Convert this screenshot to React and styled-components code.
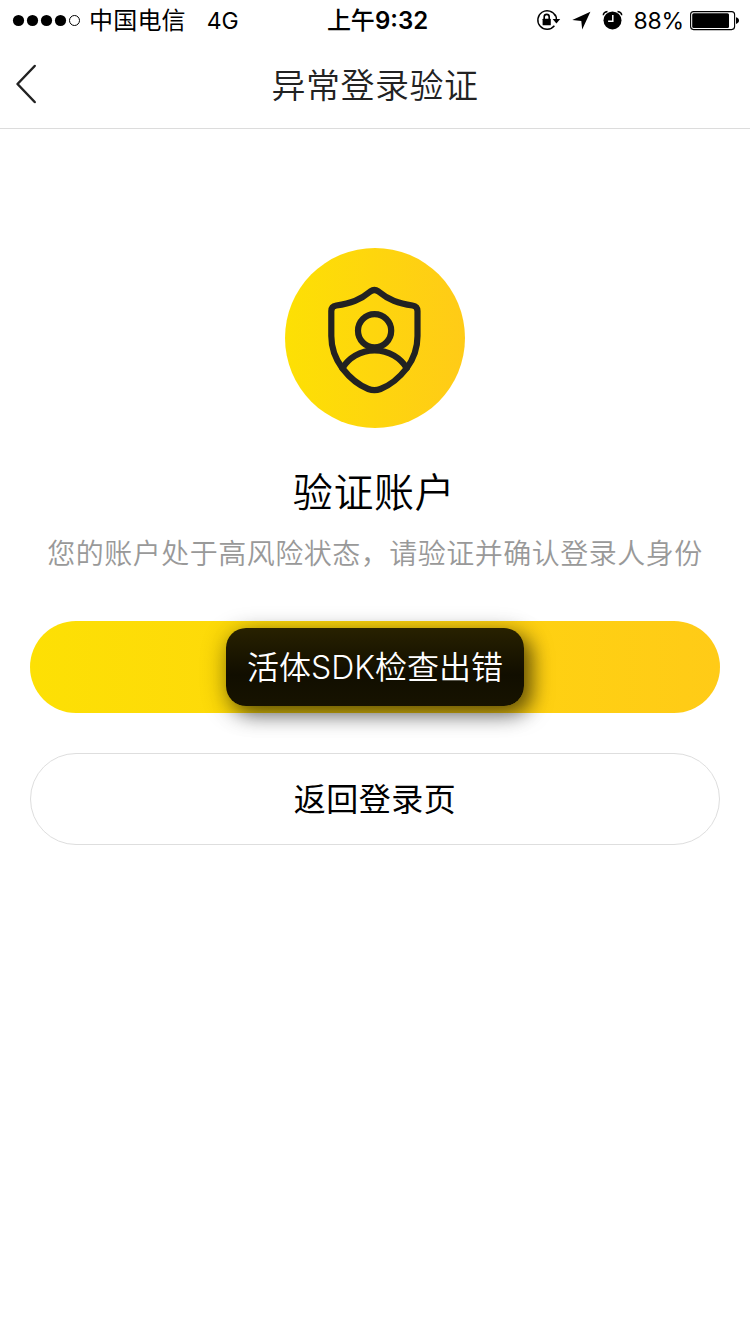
import React from "react";
import styled, { createGlobalStyle } from "styled-components";

const Global = createGlobalStyle`
  * { box-sizing: border-box; }
  body {
    margin: 0;
    background: #fff;
    font-family: Inter, "Noto Sans CJK SC", sans-serif;
    color: #000;
  }
`;

const Screen = styled.div`
  width: 750px;
  height: 1334px;
  display: flex;
  flex-direction: column;
  background: #fff;
  overflow: hidden;
`;

const StatusBar = styled.header`
  height: 40px;
  flex: none;
  display: grid;
  grid-template-columns: 1fr auto 1fr;
  grid-template-rows: 40px;
  align-items: center;
  padding: 0 11px 0 12px;
  font-size: 24px;
  line-height: 38px;
  white-space: nowrap;
`;

const StatusGroup = styled.div`
  display: flex;
  align-items: center;
  justify-content: ${(p) => (p.$end ? "flex-end" : "flex-start")};
  height: 40px;
`;

const Signal = styled.svg`
  display: block;
  margin-right: 8px;
`;

const Carrier = styled.span`
  letter-spacing: 0.2px;
  margin-right: 21px;
  padding-top: 2px;
`;

const Network = styled.span`
  font-size: 23px;
  font-weight: 400;
  letter-spacing: -0.2px;
  padding-top: 2px;
`;

const Time = styled.time`
  display: flex;
  align-items: center;
  font-weight: 500;
  padding: 2px 0 0 4px;
`;

const Digits = styled.span`
  font-size: 24px;
  font-weight: 600;
`;

const Percent = styled.span`
  font-size: 23px;
  font-weight: 400;
  letter-spacing: -0.2px;
  padding-top: 2px;
  margin: 0 6px 0 10px;
`;

const NavBar = styled.nav`
  height: 89px;
  flex: none;
  display: grid;
  grid-template-columns: 60px 1fr 60px;
  align-items: center;
  border-bottom: 1px solid #dcdcdc;
`;

const BackButton = styled.button`
  border: 0;
  padding: 0 0 0 14px;
  background: none;
  height: 88px;
  display: flex;
  align-items: center;
`;

const NavTitle = styled.h1`
  margin: 0;
  padding-top: 3px;
  text-align: center;
  color: #222;
  font-size: 34px;
  font-weight: 350;
  line-height: 85px;
  letter-spacing: 0.5px;
`;

const Content = styled.main`
  flex: 1;
  display: flex;
  flex-direction: column;
  align-items: center;
  padding: 119px 30px 0;
`;

const Badge = styled.div`
  width: 180px;
  height: 180px;
  border-radius: 50%;
  background: linear-gradient(90deg, #fde004, #ffcb17);
`;

const Heading = styled.h2`
  margin: 35px 0 0;
  font-size: 40px;
  line-height: 60px;
  font-weight: 350;
  letter-spacing: 0.6px;
  padding-right: 2px;
`;

const Description = styled.p`
  margin: 10px 0 0;
  color: #999;
  font-size: 28px;
  font-weight: 350;
  line-height: 42px;
  letter-spacing: 0.5px;
  white-space: nowrap;
`;

const Actions = styled.div`
  width: 100%;
  margin-top: 46px;
  display: flex;
  flex-direction: column;
  gap: 40px;
`;

const ButtonSlot = styled.div`
  position: relative;
`;

const Button = styled.button`
  display: block;
  width: 100%;
  height: 92px;
  padding: 2px 0 0;
  border-radius: 46px;
  border: ${(p) => (p.$primary ? "0" : "1px solid #dedede")};
  background: ${(p) => (p.$primary ? "linear-gradient(90deg, #fde004, #ffcb17)" : "#fff")};
  font: 400 32px/88px Inter, "Noto Sans CJK SC", sans-serif;
  letter-spacing: 0.5px;
  color: #000;
`;

const Toast = styled.div`
  position: absolute;
  left: 196px;
  top: 7px;
  width: 298px;
  height: 78px;
  padding-top: 2px;
  border-radius: 20px;
  background: linear-gradient(#282100, #110e00 60%, #171300);
  box-shadow: 8px 8px 20px rgba(0, 0, 0, 0.5), 0 5px 26px rgba(0, 0, 0, 0.3);
  color: #fff;
  font-size: 32px;
  font-weight: 350;
  line-height: 76px;
  text-align: center;
  white-space: nowrap;
`;

const Icon = styled.svg`
  display: block;
  flex: none;
`;

function StatusIcons() {
  return (
    <Icon width="88" height="40" viewBox="536 0 88 40">
      <path d="M555.6 16.2A9.3 9.3 0 1 0 554.4 25.8" fill="none" stroke="#000" strokeWidth="1.4" />
      <path d="M552.6 19.1h7.6l-3.8 4.4z" />
      <path d="M555.2 14.7q1.3 2 1.2 5" fill="none" stroke="#000" strokeWidth="1.4" />
      <rect x="542.6" y="18.7" width="8.2" height="6.6" rx="0.6" />
      <path d="M544.2 19.5v-2.6a2.5 2.5 0 0 1 5 0v2.6" fill="none" stroke="#000" strokeWidth="1.6" />
      <path d="M590.4 11.7L582.2 29.6L581.3 20.9L572.3 19.9Z" />
      <circle cx="612.5" cy="20.4" r="9" />
      <path d="M612.8 15v6.3h-4.7" fill="none" stroke="#fff" strokeWidth="1.5" />
      <path d="M603.3 15.2q.1-3 4.2-3.7M621.7 15.2q-.1-3-4.2-3.7" fill="none" stroke="#000" strokeWidth="1.5" />
    </Icon>
  );
}

export default function App() {
  return (
    <>
      <Global />
      <Screen>
        <StatusBar>
          <StatusGroup>
            <Signal width="69" height="40" viewBox="12 0 69 40">
              {[18.5, 32.5, 46.5, 60.5].map((x) => (
                <circle key={x} cx={x} cy="20.5" r="5.6" />
              ))}
              <circle cx="74.5" cy="20.5" r="5" fill="none" stroke="#000" />
            </Signal>
            <Carrier>中国电信</Carrier>
            <Network>4G</Network>
          </StatusGroup>
          <Time>
            上午<Digits>9:32</Digits>
          </Time>
          <StatusGroup $end>
            <StatusIcons />
            <Percent>88%</Percent>
            <Icon width="49" height="40" viewBox="690 0 49 40">
              <rect x="690.6" y="11.6" width="44" height="18" rx="3" fill="none" stroke="#000" strokeWidth="1.1" />
              <rect x="692.2" y="13.2" width="36.8" height="14.8" rx="1.5" />
              <path d="M736 17.3q3 .8 3 3.3t-3 3.3z" />
            </Icon>
          </StatusGroup>
        </StatusBar>
        <NavBar>
          <BackButton aria-label="返回">
            <Icon width="24" height="42" viewBox="14 63 24 42">
              <path
                d="M34.7 66L17.5 84L34.7 102"
                fill="none"
                stroke="#222"
                strokeWidth="2.5"
                strokeLinecap="round"
                strokeLinejoin="round"
              />
            </Icon>
          </BackButton>
          <NavTitle>异常登录验证</NavTitle>
        </NavBar>
        <Content>
          <Badge>
            <Icon width="180" height="180" fill="none" stroke="#222" strokeWidth="6.2" strokeLinecap="round" strokeLinejoin="round">
              <path d="M85.5 43.3Q89.4 40.7 93.3 43.3C104 52 113 55.5 127.500 57.500Q132.500 58.300 132.500 63V88C132.500 101.500 129 110.500 121.500 120.500C114.500 129.500 105 137.300 95.500 141Q89.400 143.400 83.300 141C74 137.300 64.500 129.500 57.500 120.500C50 110.500 46.300 101.500 46.300 88V63Q46.300 58.300 51.300 57.500C66 55.500 75 52 85.500 43.300Z" />
              <circle cx="89.6" cy="82.7" r="16.6" />
              <path d="M57.500 120A38 38 0 0 1 121.700 120" />
            </Icon>
          </Badge>
          <Heading>验证账户</Heading>
          <Description>您的账户处于高风险状态，请验证并确认登录人身份</Description>
          <Actions>
            <ButtonSlot>
              <Button $primary aria-label="验证" />
              <Toast role="alert">活体SDK检查出错</Toast>
            </ButtonSlot>
            <Button>返回登录页</Button>
          </Actions>
        </Content>
      </Screen>
    </>
  );
}
